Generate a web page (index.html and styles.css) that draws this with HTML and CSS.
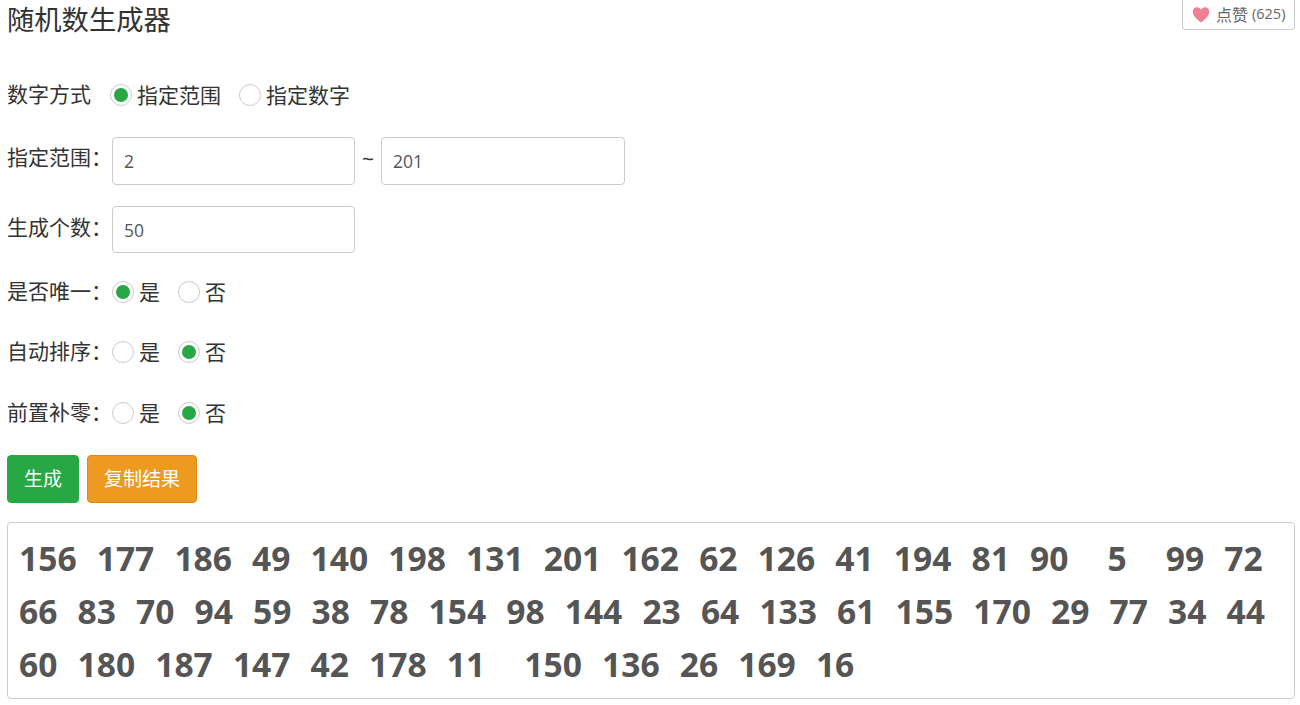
FILE: index.html
```html
<!DOCTYPE html>
<html lang="zh">
<head>
<meta charset="utf-8">
<title>随机数生成器</title>
<link rel="stylesheet" href="styles.css">
</head>
<body>
<div class="page">
  <header class="head">
    <h1 class="title">随机数生成器</h1>
    <button class="like" type="button">
      <svg class="heart" viewBox="0 0 24 24" width="18" height="18"><path d="M12 22 C9 19 1 14 1 7.5 C1 4 3.6 1.8 6.5 1.8 C8.8 1.8 10.8 3 12 5 C13.2 3 15.200 1.800 17.500 1.800 C20.400 1.800 23 4 23 7.500 C23 14 15 19 12 22 Z"/></svg>
      <span class="like-text">点赞</span>
      <span class="like-count">(625)</span>
    </button>
  </header>

  <div class="row row-mode">
    <span class="label label-mode">数字方式</span>
    <span class="radio on"></span><span class="opt opt-long">指定范围</span>
    <span class="radio"></span><span class="opt">指定数字</span>
  </div>

  <div class="row row-range">
    <span class="label">指定范围：</span>
    <div class="input">2</div>
    <span class="tilde">~</span>
    <div class="input input-b">201</div>
  </div>

  <div class="row row-count">
    <span class="label">生成个数：</span>
    <div class="input">50</div>
  </div>

  <div class="row row-a">
    <span class="label">是否唯一：</span>
    <span class="radio on"></span><span class="opt opt-short">是</span>
    <span class="radio"></span><span class="opt">否</span>
  </div>
  <div class="row row-b">
    <span class="label">自动排序：</span>
    <span class="radio"></span><span class="opt opt-short">是</span>
    <span class="radio on"></span><span class="opt">否</span>
  </div>
  <div class="row row-c">
    <span class="label">前置补零：</span>
    <span class="radio"></span><span class="opt opt-short">是</span>
    <span class="radio on"></span><span class="opt">否</span>
  </div>

  <div class="actions">
    <button class="btn btn-green" type="button">生成</button>
    <button class="btn btn-orange" type="button">复制结果</button>
  </div>

  <div class="result">
    <span>156</span><span>177</span><span>186</span><span>49</span><span>140</span><span>198</span><span>131</span><span>201</span><span>162</span><span>62</span><span>126</span><span>41</span><span>194</span><span>81</span><span class="wide">90</span><span class="wide">5</span><span>99</span><span>72</span>
    <span>66</span><span>83</span><span>70</span><span>94</span><span>59</span><span>38</span><span>78</span><span>154</span><span>98</span><span>144</span><span>23</span><span>64</span><span>133</span><span>61</span><span>155</span><span>170</span><span>29</span><span>77</span><span>34</span><span>44</span>
    <span>60</span><span>180</span><span>187</span><span>147</span><span>42</span><span>178</span><span class="wide">11</span><span>150</span><span>136</span><span>26</span><span>169</span><span>16</span>
  </div>
</div>
</body>
</html>
```
FILE: styles.css
```css
* { box-sizing: border-box; }
html, body { margin: 0; padding: 0; background: #fff; }
body {
  font-family: "Open Sans", "Noto Sans CJK SC", sans-serif;
  color: #333;
  font-size: 21px;
  overflow: hidden;
}
.page { padding: 0 5px 0 7px; }
.head { display: flex; justify-content: space-between; align-items: flex-start; height: 43px; }
.title { margin: 0; font-size: 27.3px; font-weight: 400; line-height: 39px; color: #333; }
.like {
  display: flex; align-items: center;
  width: 113px; height: 30px; padding: 0 0 0 9px;
  background: #fff; border: 1px solid #ccc; border-top: 0;
  border-radius: 0 0 4px 4px;
  font: inherit; color: #666;
}
.heart { fill: #ee7f95; margin-right: 6px; flex: none; }
.like-text { font-size: 16px; margin: -2px 4px 0 0; }
.like-count { font-size: 14.5px; margin-top: -2px; }
.row { display: flex; align-items: center; }
.row-mode { margin-top: 29px; height: 45px; }
.row-range { margin-top: 20px; height: 48px; }
.row-count { margin-top: 21px; height: 47px; }
.row-a { margin-top: 19px; height: 40px; }
.row-b { margin-top: 20px; height: 40px; }
.row-c { margin-top: 21px; height: 40px; }
.label { width: 105px; flex: none; line-height: 30px; margin-top: -2px; }
.row-range .label { margin-top: -9px; }
.row-count .label { margin-top: -5px; }
.label-mode { width: 103px; }
.radio {
  width: 22px; height: 22px; flex: none;
  border: 1px solid #ccc; border-radius: 50%;
  background: #fff; margin-right: 5px;
  display: flex; align-items: center; justify-content: center;
}
.radio.on::after { content: ""; width: 14px; height: 14px; border-radius: 50%; background: #28a745; }
.opt { margin: -2px 18px 0 0; }
.input {
  width: 243px; height: 100%;
  border: 1px solid #ccc; border-radius: 4px;
  padding: 0 11px; display: flex; align-items: center;
  font-size: 17.5px; color: #555;
}
.input-b { width: 244px; }
.tilde { width: 26px; text-align: center; font-size: 21px; margin-top: -4px; }
.actions { display: flex; gap: 8px; margin-top: 22px; }
.btn {
  height: 48px; padding: 0 0 2px;
  border-radius: 4px; font: inherit; font-size: 19px; color: #fff;
  border: 1px solid;
}
.btn-green { background: #28a745; border-color: #28a745; width: 72px; }
.btn-orange { background: #ee9a20; border-color: #d98a15; width: 110px; }
.result {
  display: flex; flex-wrap: wrap; column-gap: 20.1px;
  margin-top: 19px; height: 177px; padding: 9px 11px;
  border: 1px solid #ccc; border-radius: 4px;
  font-size: 33.6px; font-weight: 700; line-height: 53px; color: #555;
}
.result .wide { margin-right: 19px; }
```
